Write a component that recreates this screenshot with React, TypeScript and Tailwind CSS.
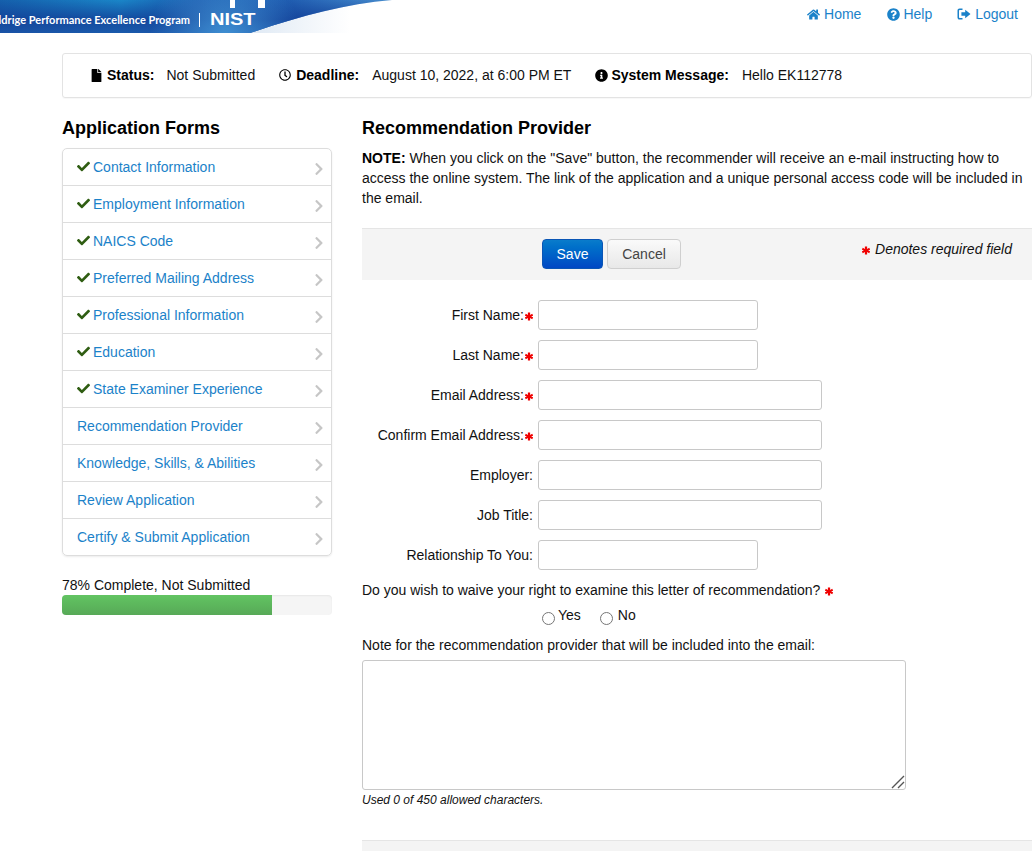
import {
  FaCheck,
  FaChevronRight,
  FaFile,
  FaHome,
  FaInfoCircle,
  FaQuestionCircle,
  FaRegClock,
} from "react-icons/fa";

// ── Data ──────────────────────────────────────────────────────────────

const FORMS = [
  { label: "Contact Information", done: true },
  { label: "Employment Information", done: true },
  { label: "NAICS Code", done: true },
  { label: "Preferred Mailing Address", done: true },
  { label: "Professional Information", done: true },
  { label: "Education", done: true },
  { label: "State Examiner Experience", done: true },
  { label: "Recommendation Provider", done: false },
  { label: "Knowledge, Skills, & Abilities", done: false },
  { label: "Review Application", done: false },
  { label: "Certify & Submit Application", done: false },
];

const FIELDS = [
  { label: "First Name:", required: true, wide: false },
  { label: "Last Name:", required: true, wide: false },
  { label: "Email Address:", required: true, wide: true },
  { label: "Confirm Email Address:", required: true, wide: true },
  { label: "Employer:", required: false, wide: true },
  { label: "Job Title:", required: false, wide: true },
  { label: "Relationship To You:", required: false, wide: false },
];

// ── Small parts ───────────────────────────────────────────────────────

function Star() {
  return (
    <svg viewBox="0 0 10 10" className="inline-block w-[8px] h-[9px] text-[#f00000]">
      <path
        d="M3.6 0h2.8v3L9 1.5l1.3 2.4L7.6 5l2.7 1.1L9 8.5 6.4 7v3H3.6V7L1 8.5-.3 6.1 2.4 5-.3 3.9 1 1.5 3.6 3z"
        fill="currentColor"
      />
    </svg>
  );
}

function LogoutIcon() {
  return (
    <svg viewBox="0 0 14 14" className="w-[14px] h-[14px]" fill="currentColor">
      <path d="M5.5 1.5H2.6C1.2 1.5.5 2.4.5 3.6v6.8c0 1.2.7 2.1 2.1 2.1h2.9V11H3c-.6 0-1-.4-1-1V4c0-.6.4-1 1-1h2.5z" />
      <path d="M8.2 2.8 13.5 7l-5.3 4.2V8.8H4.4V5.2h3.8z" />
    </svg>
  );
}

function Banner() {
  return (
    <div className="relative w-[400px] h-[33px] overflow-hidden">
      <svg viewBox="0 0 400 33" className="w-full h-full block" preserveAspectRatio="none">
        <defs>
          <linearGradient id="blue" x1="0" y1="0" x2="400" y2="0" gradientUnits="userSpaceOnUse">
            <stop offset="0" stopColor="#1560ac" />
            <stop offset="0.3" stopColor="#1a86c8" />
            <stop offset="0.5" stopColor="#1b55aa" />
            <stop offset="0.72" stopColor="#1f5cb0" />
            <stop offset="1" stopColor="#4a90d0" />
          </linearGradient>
          <linearGradient id="shade" x1="0" y1="0" x2="0" y2="1">
            <stop offset="0" stopColor="#123f97" stopOpacity="0" />
            <stop offset="0.6" stopColor="#123f97" stopOpacity="0.85" />
            <stop offset="1" stopColor="#1a50a5" stopOpacity="0.8" />
          </linearGradient>
          <radialGradient id="low" cx="225" cy="36" r="75" gradientUnits="userSpaceOnUse">
            <stop offset="0" stopColor="#3f8fd2" />
            <stop offset="1" stopColor="#3f8fd2" stopOpacity="0" />
          </radialGradient>
          <linearGradient id="pale" x1="250" y1="0" x2="350" y2="0" gradientUnits="userSpaceOnUse">
            <stop offset="0" stopColor="#dfe9f4" />
            <stop offset="1" stopColor="#ffffff" />
          </linearGradient>
        </defs>
        <rect x="0" y="0" width="400" height="33" fill="url(#pale)" />
        <path d="M0 0H392C345 4 300 16 250 33H0z" fill="url(#blue)" />
        <path d="M0 0H392C345 4 300 16 250 33H0z" fill="url(#shade)" />
        <path d="M0 0H392C345 4 300 16 250 33H0z" fill="url(#low)" />
        <path d="M230 0h5v8h-5zM258 0h7v8h-7z" fill="#ffffff" />
      </svg>
      <span className="absolute right-[210px] top-[13px] whitespace-nowrap text-[11px] leading-[14px] font-['Lato',sans-serif] font-bold text-white">
        Baldrige Performance Excellence Program
      </span>
      <span className="absolute left-[199px] top-[13px] w-px h-[14px] bg-white" />
      <span className="absolute left-[210px] top-[11px] origin-left scale-x-[1.25] text-[16px] leading-[17px] font-['Liberation_Sans',sans-serif] font-bold text-white">
        NIST
      </span>
    </div>
  );
}

// ── Page ──────────────────────────────────────────────────────────────

export default function App() {
  return (
    <div className="w-[1032px] h-[851px] overflow-hidden bg-white text-[14px] leading-[20px] text-[#111] font-['Liberation_Sans',Arial,sans-serif]">
      {/* Header */}
      <div className="flex justify-between h-[53px]">
        <Banner />
        <nav className="flex gap-[26px] pr-[14px] pt-[4px] h-[24px] text-[#1b82c9]">
          <a className="flex items-center gap-[4px]"><FaHome className="text-[13px]" />Home</a>
          <a className="flex items-center gap-[3px]"><FaQuestionCircle className="text-[13px]" />Help</a>
          <a className="flex items-center gap-[4px] -ml-[1px]"><LogoutIcon />Logout</a>
        </nav>
      </div>

      <div className="pl-[62px]">
        {/* Status bar */}
        <div className="flex items-center h-[45px] pl-[27px] pb-[1px] border border-[#e3e3e3] rounded-[3px] shadow-[0_1px_1px_rgba(0,0,0,0.03)]">
          <FaFile className="text-[13px] text-black mr-[4px]" />
          <b className="text-black mr-[12px]">Status:</b>
          <span className="mr-[24px]">Not Submitted</span>
          <FaRegClock className="text-[12px] text-black mr-[5px]" />
          <b className="text-black mr-[13px]">Deadline:</b>
          <span className="mr-[24px]">August 10, 2022, at 6:00 PM ET</span>
          <FaInfoCircle className="text-[13px] text-black mr-[3px]" />
          <b className="text-black mr-[13px]">System Message:</b>
          <span>Hello EK112778</span>
        </div>

        <div className="flex gap-[30px] pt-[20px]">
          {/* Sidebar */}
          <aside className="w-[270px] shrink-0">
            <h2 className="text-[18px] leading-[20px] font-bold text-black mb-[10px]">Application Forms</h2>
            <ul className="border border-[#ddd] rounded-[5px] shadow-[0_1px_2px_rgba(0,0,0,0.08)]">
              {FORMS.map((f, i) => (
                <li
                  key={f.label}
                  className={`flex items-center pl-[14px] pr-[5px] text-[#1b82c9] ${i > 0 ? "h-[37px] border-t border-[#ddd]" : "h-[36px]"}`}
                >
                  {f.done && <FaCheck className="text-[13px] text-[#2f5d12] mr-[3px] -mt-[1px]" />}
                  <span className="flex-1 -mt-[1px]">{f.label}</span>
                  <FaChevronRight className="text-[14px] text-[#c6c6c6] mt-[3px]" />
                </li>
              ))}
            </ul>
            <p className="mt-[19px] text-[14px] leading-[20px]">78% Complete, Not Submitted</p>
            <div className="h-[20px] rounded-[4px] bg-[#f5f5f5] overflow-hidden shadow-[inset_0_1px_2px_rgba(0,0,0,0.06)]">
              <div className="h-full bg-gradient-to-b from-[#62c462] to-[#57a957]" style={{ width: "77.8%" }} />
            </div>
          </aside>

          {/* Main form */}
          <main className="flex-1 min-w-0">
            <h2 className="text-[18px] leading-[20px] font-bold text-black mb-[10px]">Recommendation Provider</h2>
            <p className="w-[664px]">
              <b className="text-black">NOTE:</b> When you click on the "Save" button, the recommender will receive an e-mail instructing how to access the online system. The link of the application and a unique personal access code will be included in the email.
            </p>

            <div className="flex mt-[20px] h-[52px] bg-[#f4f4f4] border-t border-[#e5e5e5]">
              <div className="flex gap-[4px] pl-[180px] pt-[10px]">
                <button className="w-[61px] h-[30px] rounded-[4px] border border-[#0a55b5] bg-gradient-to-b from-[#0a7ccb] to-[#0047c4] text-white">
                  Save
                </button>
                <button className="w-[74px] h-[30px] rounded-[4px] border border-[#cfcfcf] bg-gradient-to-b from-[#fafafa] to-[#e8e8e8] text-[#444]">
                  Cancel
                </button>
              </div>
              <div className="ml-auto pr-[20px] pt-[10px] italic flex items-center gap-[5px] h-[20px] box-content">
                <span className="flex mt-[2px]"><Star /></span>
                <span>Denotes required field</span>
              </div>
            </div>

            <div className="flex flex-col gap-[10px] mt-[20px]">
              {FIELDS.map((f) => (
                <div key={f.label} className="flex items-center">
                  <label className="flex items-center justify-end w-[176px] pr-[5px] shrink-0">
                    {f.label}
                    {f.required && <span className="flex ml-[1px] mt-[2px]"><Star /></span>}
                  </label>
                  <input
                    type="text"
                    className={`h-[30px] rounded-[3px] border border-[#c8c8c8] bg-white outline-none ${f.wide ? "w-[284px]" : "w-[220px]"}`}
                  />
                </div>
              ))}
            </div>

            <p className="flex items-center mt-[10px] h-[20px]">
              Do you wish to waive your right to examine this letter of recommendation?
              <span className="flex ml-[5px] mt-[2px]"><Star /></span>
            </p>
            <div className="flex items-start pl-[180px] h-[30px] mt-[5px]">
              <input type="radio" name="waive" className="w-[13px] h-[13px] mt-[7px]" />
              <span className="ml-[3px]">Yes</span>
              <input type="radio" name="waive" className="w-[13px] h-[13px] mt-[7px] ml-[19px]" />
              <span className="ml-[5px]">No</span>
            </div>
            <p>Note for the recommendation provider that will be included into the email:</p>
            <div className="relative w-[544px] mt-[5px]">
              <textarea className="block w-full h-[130px] resize-none rounded-[3px] border border-[#c8c8c8] outline-none" />
              <svg viewBox="0 0 14 14" className="absolute right-[1px] bottom-[1px] w-[14px] h-[14px]" stroke="#555" strokeWidth="1.4">
                <path d="M1 13 13 1M7 13l6-6" />
              </svg>
            </div>
            <p className="italic text-[12px] leading-[16px] mt-[2px]">Used 0 of 450 allowed characters.</p>
            <div className="mt-[32px] h-[40px] bg-[#f4f4f4] border-t border-[#e5e5e5]" />
          </main>
        </div>
      </div>
    </div>
  );
}
